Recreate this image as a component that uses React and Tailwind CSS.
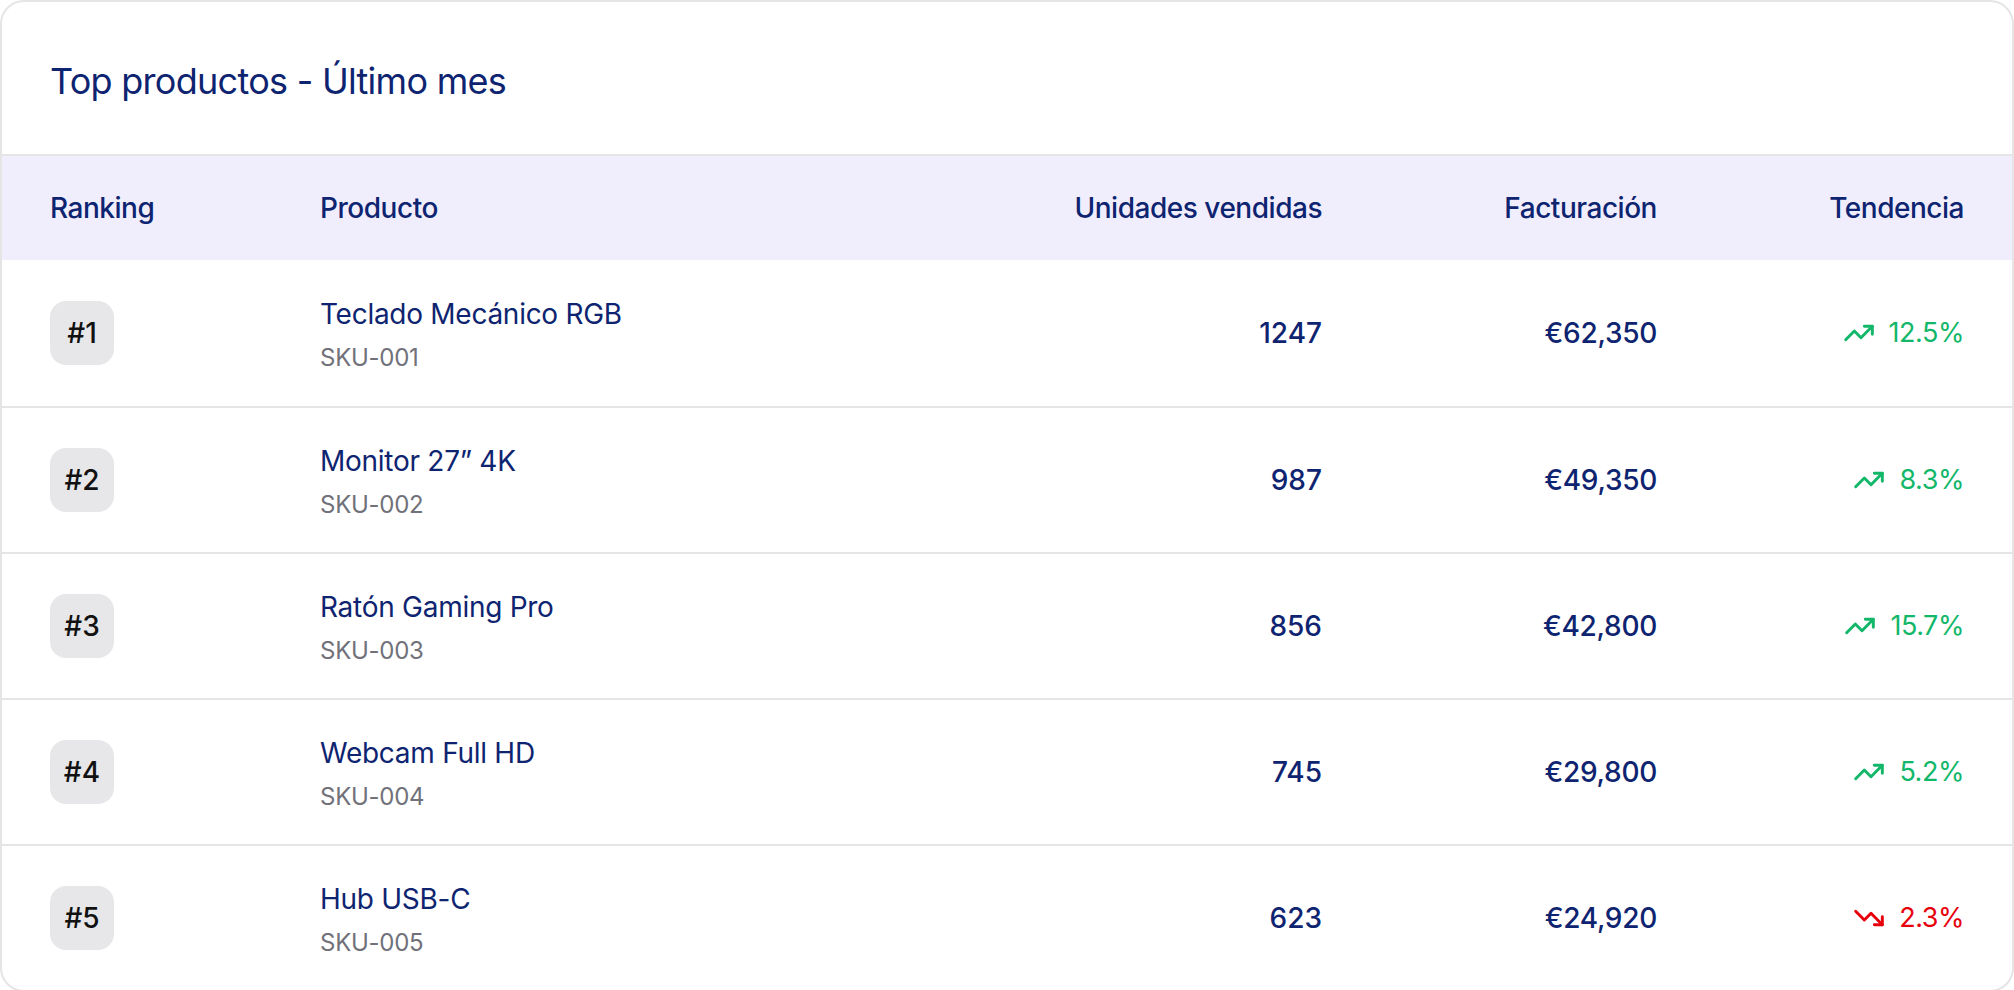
import React from "react";

const rows = [
  { rank: 1, name: "Teclado Mecánico RGB", sku: "SKU-001", units: "1247", rev: "€62,350", trend: "12.5%", up: true },
  { rank: 2, name: "Monitor 27” 4K", sku: "SKU-002", units: "987", rev: "€49,350", trend: "8.3%", up: true },
  { rank: 3, name: "Ratón Gaming Pro", sku: "SKU-003", units: "856", rev: "€42,800", trend: "15.7%", up: true },
  { rank: 4, name: "Webcam Full HD", sku: "SKU-004", units: "745", rev: "€29,800", trend: "5.2%", up: true },
  { rank: 5, name: "Hub USB-C", sku: "SKU-005", units: "623", rev: "€24,920", trend: "2.3%", up: false },
];

function TrendUp() {
  return (
    <svg width="32" height="32" viewBox="0 0 24 24" fill="none" stroke="currentColor" strokeWidth="2.2" strokeLinecap="round" strokeLinejoin="round">
      <polyline points="22 7 13.5 15.5 8.5 10.5 2 17" />
      <polyline points="16 7 22 7 22 13" />
    </svg>
  );
}

function TrendDown() {
  return (
    <svg width="32" height="32" viewBox="0 0 24 24" fill="none" stroke="currentColor" strokeWidth="2.2" strokeLinecap="round" strokeLinejoin="round">
      <polyline points="22 17 13.5 8.5 8.5 13.5 2 7" />
      <polyline points="16 17 22 17 22 11" />
    </svg>
  );
}

const grid = "grid grid-cols-[270px_702px_300px_335px_307px] items-center px-12";

export default function App() {
  return (
    <div className="w-[2014px] min-h-[990px] bg-white" style={{ fontFamily: "Inter, 'Noto Sans', sans-serif" }}>
      <div className="border-2 border-[#e5e5e5] rounded-3xl overflow-hidden bg-white text-[#0e2470]">
        <div className="px-12 pt-[51px] pb-[45px] border-b-2 border-[#e5e5e5]">
          <h2 className="text-[36px] leading-[56px] font-normal tracking-[-0.02em]">Top productos - Último mes</h2>
        </div>
        <div className={grid + " bg-[#f0eefd] h-[104px] text-[28px] leading-[40px] font-medium tracking-[-0.017em]"}>
          <div>Ranking</div>
          <div>Producto</div>
          <div className="text-right">Unidades vendidas</div>
          <div className="text-right">Facturación</div>
          <div className="text-right">Tendencia</div>
        </div>
        {rows.map((r, i) => (
          <div key={r.rank} className={grid + " h-[146px] " + (i > 0 ? "border-t-2 border-[#e5e5e5]" : "")}>
            <div>
              <div className="w-16 h-16 rounded-2xl bg-[#e7e7e9] flex items-center justify-center text-[28px] font-medium text-[#111111]">
                #{r.rank}
              </div>
            </div>
            <div className="flex flex-col gap-2 tracking-[-0.017em]">
              <div className="text-[28px] leading-[40px] mt-[2px]">{r.name}</div>
              <div className="text-[24px] leading-[32px] text-[#71717a]">{r.sku}</div>
            </div>
            <div className="text-right text-[28px] leading-[40px] font-medium">{r.units}</div>
            <div className="text-right text-[28px] leading-[40px] font-medium tracking-[-0.01em]">{r.rev}</div>
            <div className={"flex items-center justify-end gap-[14px] text-[27px] leading-[40px] tracking-[-0.017em] " + (r.up ? "text-[#12b76a]" : "text-[#e7000b]")}>
              {r.up ? <TrendUp /> : <TrendDown />}
              <span>{r.trend}</span>
            </div>
          </div>
        ))}
      </div>
    </div>
  );
}
